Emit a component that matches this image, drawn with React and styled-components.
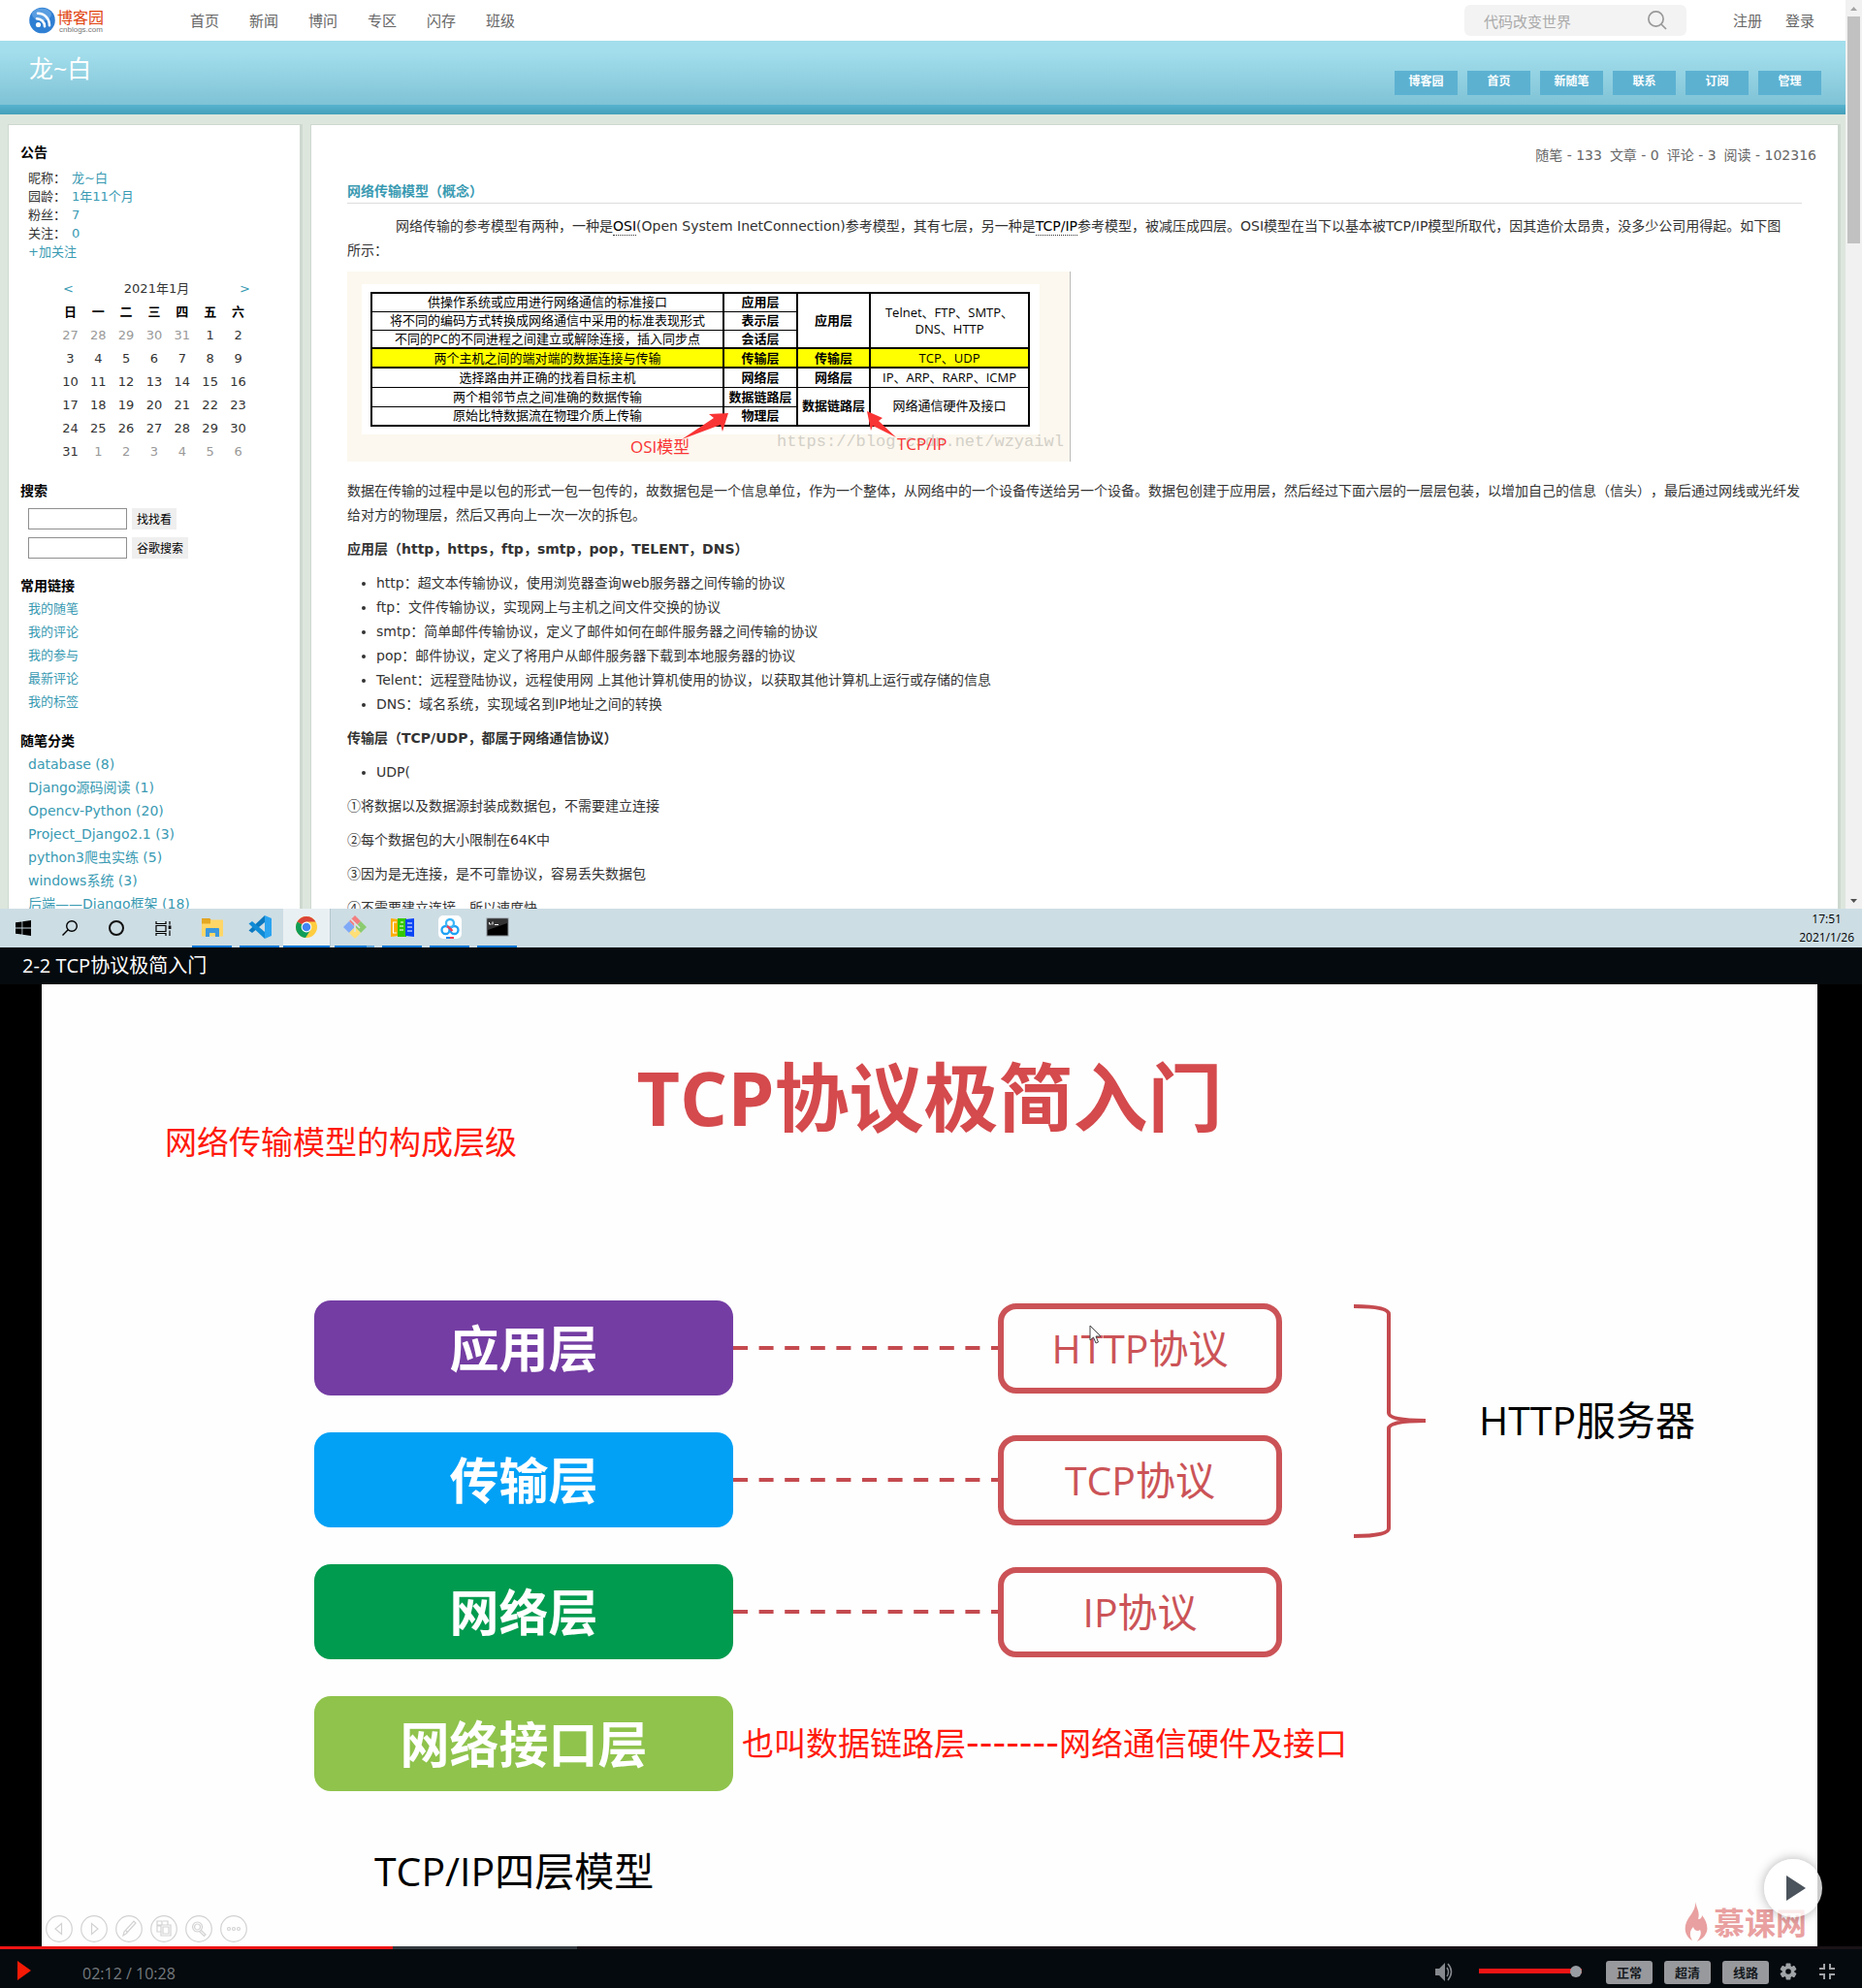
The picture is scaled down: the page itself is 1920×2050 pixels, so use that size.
import React from "react";
import styled, { createGlobalStyle } from "styled-components";

const verdana = `"DejaVu Sans", "Noto Sans CJK SC", sans-serif`;
const yahei = `"Open Sans", "Noto Sans CJK SC", sans-serif`;
const cjk = `"Noto Sans CJK SC", sans-serif`;

const GlobalStyle = createGlobalStyle`
  *, *::before, *::after { box-sizing: border-box; }
  body { margin: 0; background: #000; font-family: ${verdana}; text-spacing-trim: space-all; }
  h1, h2, h3, p, ul, figure { margin: 0; padding: 0; font-weight: inherit; }
  a { text-decoration: none; color: inherit; }
  button, input { font-family: inherit; }
  button { border: 0; padding: 0; background: none; cursor: pointer; }
`;

const Screen = styled.div`
  display: flex;
  flex-direction: column;
  height: 100vh;
`;

/* ---------- browser window ---------- */

const Browser = styled.section`
  flex: 1 1 0;
  min-height: 600px;
  display: flex;
  overflow: hidden;
  background: #dde6dd;
`;

const Page = styled.div`
  flex: 1;
  min-width: 0;
  display: flex;
  flex-direction: column;
`;

const ScrollTrack = styled.div`
  width: 17px;
  flex: none;
  display: flex;
  flex-direction: column;
  align-items: center;
  background: #f1f1f1;
`;

const ScrollThumb = styled.div`
  width: 13px;
  height: 234px;
  margin-bottom: auto;
  background: #c1c1c1;
`;

const ScrollArrow = styled.svg`
  width: 17px;
  height: 17px;
  fill: ${(p) => p.$color};
`;

const TopBar = styled.header`
  flex: none;
  height: 42px;
  padding: 0 32px 0 30px;
  display: flex;
  align-items: center;
  background: #fff;
  color: #666;
  font: 15px/24px ${cjk};
`;

const Logo = styled.a`
  display: flex;
  align-items: center;
  gap: 2px;
  width: 166px;
`;

const LogoText = styled.span`
  display: flex;
  flex-direction: column;
  color: #e0430f;
  font-size: 16px;
  line-height: 18px;
`;

const LogoDomain = styled.small`
  padding-left: 2px;
  color: #777;
  font: 8px/9px "Liberation Sans", sans-serif;
`;

const TopNav = styled.nav`
  display: flex;
  gap: 31px;
  flex: 1;
`;

const SearchBox = styled.form`
  display: flex;
  align-items: center;
  justify-content: space-between;
  width: 229px;
  height: 32px;
  padding: 0 20px;
  border-radius: 6px;
  background: #f3f3f3;
`;

const SearchInput = styled.input`
  width: 150px;
  padding: 0;
  border: 0;
  outline: 0;
  background: transparent;
  font-size: 15px;
  &::placeholder { color: #aaa; }
`;

const SearchButton = styled.button`
  display: flex;
`;

const Account = styled.div`
  display: flex;
  gap: 24px;
  margin-left: 48px;
`;

const Banner = styled.div`
  flex: none;
  display: flex;
  justify-content: space-between;
  align-items: flex-start;
  height: 76px;
  padding: 12px 25px 0 30px;
  background: linear-gradient(#a3deec 15%, #7fc3d6 66px, #57b3ce 66px, #459fba);
`;

const BlogTitle = styled.h1`
  color: #fff;
  font: 25px/32px ${yahei};
`;

const BlogNav = styled.nav`
  display: flex;
  gap: 10px;
  padding-top: 19px;
`;

const BlogNavLink = styled.a`
  width: 65px;
  height: 25px;
  background: #5cb1d1;
  color: #fff;
  text-align: center;
  font: bold 12px/20px ${cjk};
`;

const Columns = styled.div`
  flex: 1;
  display: flex;
  align-items: flex-start;
  gap: 8px;
  padding: 10px 5px 0 8px;
`;

const Panel = styled.div`
  border: solid #cdd8cf;
  border-width: 1px 3px 0 1px;
  background: #fff;
`;

const Sidebar = styled(Panel)`
  flex: none;
  width: 304px;
  padding: 0 12px;
  color: #333;
  font-size: 13px;
`;

const SideTitle = styled.h3`
  margin-top: 16px;
  padding-bottom: 2px;
  color: #000;
  font: bold 14px/22px ${cjk};
`;

const SideBody = styled.div`
  padding-left: 8px;
`;

const Profile = styled(SideBody)`
  padding-top: 5px;
  line-height: 19px;
`;

const ProfileRow = styled.div`
  display: flex;
  gap: 6px;
`;

const TealLink = styled.a`
  color: #399ab2;
`;

const Calendar = styled.table`
  width: 202px;
  margin: 17px auto 0;
  border-collapse: collapse;
  table-layout: fixed;
  text-align: center;
  line-height: 24px;
  th, td { padding: 0; height: 24px; }
  th { color: #000; }
`;

const Month = styled.div`
  display: flex;
  justify-content: space-between;
  padding: 0 2px 0 7px;
  color: #333;
  font-weight: normal;
`;

const Day = styled.td`
  color: ${(p) => (p.$muted ? "#999" : "#333")};
`;

const SideSearch = styled.form`
  display: flex;
  gap: 5px;
  margin-top: ${(p) => (p.$first ? 6 : 8)}px;
`;

const SideInput = styled.input`
  width: 102px;
  height: 22px;
  border: 1px solid #8f8f8f;
  background: #fff;
`;

const SideButton = styled.button`
  height: 22px;
  padding: 0 5px;
  background: #efefef;
  color: #000;
  font: 12px/22px ${cjk};
`;

const LinkList = styled.ul`
  padding-left: 8px;
  list-style: none;
  font-size: ${(p) => p.$size || 13}px;
  line-height: 24px;
  white-space: nowrap;
`;

const Content = styled(Panel)`
  flex: 1;
  min-width: 0;
  padding: 19px 22px 0 37px;
`;

const Stats = styled.div`
  display: flex;
  justify-content: flex-end;
  gap: 8px;
  color: #666;
  font-size: 14px;
  line-height: 24px;
`;

const Article = styled.article`
  margin-right: 15px;
  color: #333;
  font-size: 14px;
  line-height: 25px;
  p, ul { margin: 10px 0; }
  ul { padding-left: 30px; }
  abbr { color: #000; text-decoration: none; border-bottom: 1px dotted #333; padding-bottom: 1px; }
`;

const PostTitle = styled.h2`
  margin-top: 13px;
  padding-bottom: 2px;
  border-bottom: 1px solid #ddd;
  color: #399ab2;
  font: bold 14px/22px ${cjk};
`;

const Lead = styled.p`
  && { margin: 11px 0 9px; }
  text-indent: 50px;
`;

const Marker = styled.span`
  font-family: ${cjk};
  line-height: 1;
`;

const Figure = styled.figure`
  position: relative;
  width: 746px;
  height: 196px;
  margin-bottom: 18px;
  padding: 13px 31px 0 15px;
  border-right: 1px solid #bbb;
  background: #fcf8ef;
`;

const FigurePaper = styled.div`
  padding: 8px 10px 8px 9px;
  background: #fff;
`;

const HotRow = styled.tr`
  background: #ff0;
`;

const ModelTable = styled.table`
  width: 100%;
  border: 2px solid #000;
  border-collapse: collapse;
  table-layout: fixed;
  color: #000;
  text-align: center;
  font: 13px/17px ${yahei};
  td, th { height: 19px; padding: 0; border: 1px solid #000; white-space: nowrap; }
  tr > * + * { border-left-width: 2px; }
  ${HotRow} > * { height: 20px; border-top-width: 2px; border-bottom-width: 2px; }
  ${HotRow} ~ tr > * { height: 20px; }
`;

const FigureMark = styled.span`
  position: absolute;
  top: ${(p) => p.$top}px;
  left: ${(p) => p.$left}px;
  color: ${(p) => p.$color || "#f93434"};
  font: 17px/20px ${(p) => p.$font || yahei};
`;

const FigureArrows = styled.svg`
  position: absolute;
  top: 0;
  left: 0;
  width: 746px;
  height: 196px;
`;

/* ---------- taskbar ---------- */

const Taskbar = styled.footer`
  flex: none;
  display: flex;
  height: 40px;
  background: #cddde4;
`;

const SystemButton = styled.button`
  width: 48px;
  display: grid;
  place-items: center;
`;

const AppButton = styled.button`
  width: 49px;
  padding: 0 4px;
  border-right: ${(p) => (p.$active ? "1px solid #b5c7cf" : "0")};
  background: ${(p) => (p.$active ? "#e9f0f3" : "none")};
  svg { display: block; margin: 0 auto; }
  &::after {
    content: "";
    display: block;
    height: 2px;
    margin: 0 ${(p) => (p.$active ? "-4px" : "0")};
    background: ${(p) => (p.$stacked ? "linear-gradient(90deg, #0077d7 80%, #5ba3dc 80%)" : "#0077d7")};
  }
`;

const Apps = styled.div`
  display: flex;
  padding-left: 2px;
`;

const Clock = styled.time`
  margin-left: auto;
  padding: 1px 8px 0;
  color: #000;
  text-align: center;
  font: 12px/19px ${yahei};
`;

/* ---------- video player ---------- */

const Player = styled.section`
  flex: none;
  position: relative;
  background: #000;
`;

const PlayerTitle = styled.h2`
  height: 38px;
  padding-left: 23px;
  background: #050a0e;
  color: #fff;
  font: 20px/38px ${yahei};
`;

const Slide = styled.div`
  margin: 0 46px 0 43px;
  padding: 91px 0 4px;
  background: #fefefe;
  font-family: ${yahei};
`;

const SlideTitle = styled.h3`
  color: #d44a4d;
  text-align: center;
  font-size: 77px;
  font-weight: bold;
  line-height: 52px;
`;

const RedNote = styled.p`
  padding-left: ${(p) => p.$indent}px;
  color: #ff1a0c;
  font-size: 33px;
  line-height: 40px;
  white-space: nowrap;
`;

const Hyphens = styled.span`
  font-family: "DejaVu Sans", sans-serif;
  font-size: 38px;
  line-height: 1;
`;

const Diagram = styled.div`
  display: flex;
  align-items: flex-start;
  margin-top: 143px;
  padding-left: 281px;
`;

const Layers = styled.div`
  display: flex;
  flex-direction: column;
  gap: 38px;
  width: 998px;
`;

const LayerRow = styled.div`
  display: flex;
  align-items: center;
`;

const Layer = styled.div`
  flex: none;
  width: 432px;
  height: 98px;
  border-radius: 17px;
  background: ${(p) => p.$color};
  color: #fff;
  text-align: center;
  font: bold 51px/94px ${cjk};
`;

const Connector = styled.svg`
  flex: 1;
  height: 4px;
  stroke: #c44a4f;
  stroke-width: 4;
  stroke-dasharray: 15 11.6;
`;

const Protocol = styled.div`
  flex: none;
  position: relative;
  width: 293px;
  height: 93px;
  border: 6px solid #cb5357;
  border-radius: 19px;
  color: #cb5357;
  text-align: center;
  font-size: 41px;
  line-height: 80px;
`;

const Pointer = styled.svg`
  position: absolute;
  top: 16px;
  left: 88px;
`;

const ServerGroup = styled.div`
  display: flex;
  align-items: center;
  gap: 54px;
  margin: 4px 0 0 74px;
  color: #000;
  font-size: 41px;
  white-space: nowrap;
`;

const ServerLabel = styled.span`
  padding-bottom: 8px;
`;

const Caption = styled.p`
  margin-top: 53px;
  padding-left: 343px;
  color: #000;
  font-size: 41px;
  line-height: 58px;
`;

const SlideTools = styled.div`
  display: flex;
  gap: 8px;
  margin-top: 17px;
  padding-left: 4px;
`;

const SlideTool = styled.button`
  width: 28px;
  height: 28px;
  svg { display: block; }
`;

const Stage = styled.div`
  position: relative;
`;

const Watermark = styled.div`
  position: absolute;
  right: 57px;
  bottom: 5px;
  display: flex;
  align-items: center;
  gap: 6px;
  color: #e9a0a0;
  font: bold 32px/42px ${cjk};
`;

const BigPlay = styled.button`
  position: absolute;
  right: 41px;
  bottom: 30px;
  width: 60px;
  height: 60px;
  border-radius: 50%;
  background: rgba(255, 255, 255, 0.8);
  box-shadow: 0 0 12px rgba(0, 0, 0, 0.3);
  svg { display: block; }
`;

const Progress = styled.div`
  display: flex;
  height: 3px;
  background: #191216;
`;

const ProgressPart = styled.div`
  background: ${(p) => p.$color};
`;

const Controls = styled.div`
  display: flex;
  align-items: center;
  height: 40px;
  padding: 0 27px 0 18px;
  background: #050a0e;
`;

const IconButton = styled.button`
  display: flex;
`;

const Time = styled.span`
  margin: 10px auto 0 53px;
  color: #757a7e;
  font: 16px/20px ${yahei};
`;

const Volume = styled.input`
  appearance: none;
  width: 106px;
  height: 12px;
  margin: 5px 25px 0 27px;
  background: linear-gradient(#f01414, #f01414) 0 50% / 100% 5px no-repeat;
  &::-webkit-slider-thumb {
    appearance: none;
    width: 12px;
    height: 12px;
    border-radius: 50%;
    background: #989da3;
  }
`;

const VolumeButton = styled(IconButton)`
  padding-top: 4px;
`;

const Options = styled.div`
  display: flex;
  gap: 12px;
  margin-right: 11px;
  padding-top: 7px;
`;

const Option = styled.button`
  width: 48px;
  height: 24px;
  border-radius: 3px;
  background: #98999d;
  color: #15191d;
  font: bold 13px/24px ${cjk};
`;

const LowIcons = styled.div`
  display: flex;
  gap: 22px;
  padding-top: 5px;
`;

/* ---------- data ---------- */

const days = [
  27, 28, 29, 30, 31, 1, 2, 3, 4, 5, 6, 7, 8, 9, 10, 11, 12, 13, 14, 15, 16,
  17, 18, 19, 20, 21, 22, 23, 24, 25, 26, 27, 28, 29, 30, 31, 1, 2, 3, 4, 5, 6,
];
const weeks = [0, 1, 2, 3, 4, 5].map((w) => days.slice(w * 7, w * 7 + 7));

const profile = [["昵称：", "龙~白"], ["园龄：", "1年11个月"], ["粉丝：", "7"], ["关注：", "0"]];
const commonLinks = ["我的随笔", "我的评论", "我的参与", "最新评论", "我的标签"];
const categories = [
  "database (8)", "Django源码阅读 (1)", "Opencv-Python (20)", "Project_Django2.1 (3)",
  "python3爬虫实练 (5)", "windows系统 (3)", "后端——Django框架 (18)",
];
const protocols = [
  "http：超文本传输协议，使用浏览器查询web服务器之间传输的协议",
  "ftp：文件传输协议，实现网上与主机之间文件交换的协议",
  "smtp：简单邮件传输协议，定义了邮件如何在邮件服务器之间传输的协议",
  "pop：邮件协议，定义了将用户从邮件服务器下载到本地服务器的协议",
  "Telent：远程登陆协议，远程使用网 上其他计算机使用的协议，以获取其他计算机上运行或存储的信息",
  "DNS：域名系统，实现域名到IP地址之间的转换",
];
const udpNotes = [
  ["①", "将数据以及数据源封装成数据包，不需要建立连接"],
  ["②", "每个数据包的大小限制在64K中"],
  ["③", "因为是无连接，是不可靠协议，容易丢失数据包"],
  ["④", "不需要建立连接，所以速度快"],
];
const layers = [
  { name: "应用层", color: "#743da3", protocol: "HTTP协议" },
  { name: "传输层", color: "#02a1f6", protocol: "TCP协议" },
  { name: "网络层", color: "#009b4f", protocol: "IP协议" },
];

/* ---------- icons ---------- */

const BlogLogoIcon = () => (
  <svg width="27" height="28" viewBox="0 0 27 28">
    <circle cx="13.5" cy="14" r="13.3" fill="#2f7fd3" />
    <ellipse cx="13" cy="8" rx="10" ry="6.5" fill="#7db8ec" opacity=".55" />
    <circle cx="9.5" cy="18.5" r="2.6" fill="#fff" />
    <path d="M8 12.2a8 8 0 0 1 8 8M9 6.8c7 0 12 5.500 12 12.500" fill="none" stroke="#fff" strokeWidth="2.600" strokeLinecap="round" />
  </svg>
);

const Magnifier = () => (
  <svg width="20" height="20" viewBox="0 0 20 20" fill="none" stroke="#999" strokeWidth="1.700">
    <circle cx="8.500" cy="8.500" r="7.600" />
    <path d="M14 14l5 5" />
  </svg>
);

const WindowsIcon = () => (
  <svg width="16" height="16" viewBox="0 0 16 16">
    <path d="M0 2.300l6.500-.9v6.200H0zM7.300 1.300L16 0v7.600H7.300zM0 8.400h6.500v6.200L0 13.700zM7.300 8.400H16V16l-8.700-1.300z" />
  </svg>
);

const TaskSearchIcon = () => (
  <svg width="18" height="18" viewBox="0 0 18 18" fill="none" stroke="#000" strokeWidth="1.400">
    <circle cx="11" cy="7" r="5.300" />
    <path d="M7.200 10.800L1.500 16.500" />
  </svg>
);

const CortanaIcon = () => (
  <svg width="18" height="18" viewBox="0 0 18 18" fill="none" stroke="#111" strokeWidth="2">
    <circle cx="9" cy="9" r="7" />
  </svg>
);

const TaskViewIcon = () => (
  <svg width="17" height="17" viewBox="0 0 17 17" fill="none" stroke="#000" strokeWidth="1.200">
    <path d="M1 1v2.500h10V1M1 16v-2.500h10V16M1 5.500h10v6H1zM15 1v3.500M15 10.500V16" />
    <path d="M14.300 6h1.500v2.500h-1.500z" fill="#000" />
  </svg>
);

const AppSvg = ({ children }) => (
  <svg width="26" height="38" viewBox="0 -6 26 38">{children}</svg>
);

const FolderIcon = () => (
  <AppSvg>
    <path d="M2 4h8l2 2H2z" fill="#d99a1b" />
    <rect x="2" y="5.500" width="22" height="17" fill="#ffd667" />
    <rect x="2" y="4.500" width="9" height="5" fill="#e5a823" />
    <path d="M6 23v-8q0-1 1-1h12q1 0 1 1v8h-4v-4h-6v4z" fill="#3b97dd" />
  </AppSvg>
);

const CodeIcon = () => (
  <AppSvg>
    <path d="M18 1l7 3v18l-7 3z" fill="#2aa4f0" />
    <path d="M18 1v7L5 19l-3.500-2.500z" fill="#0b78bf" />
    <path d="M1.500 9.500L5 7l13 11v7z" fill="#108bd6" />
  </AppSvg>
);

const ChromeIcon = () => (
  <AppSvg>
    <circle cx="13" cy="13" r="11" fill="#ffcd40" />
    <path d="M13 13L3.500 7.500A11 11 0 0 1 22.500 7.500H13z" fill="#db4437" />
    <path d="M3.500 7.500A11 11 0 0 0 12 24l5.500-8.500L13 13z" fill="#0f9d58" />
    <circle cx="13" cy="13" r="5.400" fill="#fff" />
    <circle cx="13" cy="13" r="4.300" fill="#4285f4" />
  </AppSvg>
);

const GitIcon = () => (
  <AppSvg>
    <path d="M13 1l6 6-6 6-6-6z" fill="#f27f80" />
    <path d="M7 7l6 6-6 6-6-6z" fill="#7fa9f7" />
    <path d="M19 7l6 6-6 6-6-6z" fill="#8ccb70" />
    <path d="M13 13l6 6-6 6-6-6z" fill="#ffdf76" />
    <path d="M9 5l4 4v9M13 9l5 5" fill="none" stroke="#dbe6ea" strokeWidth="1.600" />
  </AppSvg>
);

const BooksIcon = () => (
  <AppSvg>
    <path d="M1 4l8 1v17l-8 1z" fill="#ffae00" />
    <path d="M8 4h9v19H8z" fill="#35c800" />
    <path d="M16 5l9-1v19l-9-1z" fill="#0a45f5" />
    <path d="M3 8h4M3.500 8v11M3 19h4M11 8h3M10 12h4M10 16h4M18 9h5M18 13h5M18 17h5" stroke="#fff" strokeWidth="1.200" fill="none" />
  </AppSvg>
);

const CloudDiskIcon = () => (
  <AppSvg>
    <rect x="1" y="1" width="24" height="24" rx="5" fill="#fff" />
    <g fill="none" strokeWidth="2.300">
      <circle cx="8.500" cy="16" r="4" stroke="#1fa2f5" />
      <circle cx="17.500" cy="16" r="4" stroke="#1fa2f5" />
      <circle cx="13" cy="9" r="4" stroke="#3cb6f7" />
      <path d="M10 12q3 2 5.500 5" stroke="#f23c55" />
    </g>
    <path d="M9 24h4" stroke="#1687f0" strokeWidth="2" />
    <path d="M13 24h4" stroke="#f23c55" strokeWidth="2" />
  </AppSvg>
);

const TerminalIcon = () => (
  <AppSvg>
    <rect x="2" y="4" width="22" height="18" fill="#000" stroke="#8d9499" />
    <path d="M3 5h20v4L3 16z" fill="#333" />
    <path d="M4.500 8v2h2M8 7.500v3M10 10.500h4" stroke="#fff" fill="none" />
  </AppSvg>
);

const toolShapes = [
  <path key="a" d="M16.500 8.500v11L10 14z" />,
  <path key="a" d="M11.500 8.500v11L18 14z" />,
  <path key="a" d="M8 21l1-4L19 6l2 2-10 11z M11 16l2 2" />,
  <path key="a" d="M7 6h5v4H7zM13 6h5v4M7 11h4v6H7zM11 10h10v11H11zM13 12h6v7h-6z" />,
  <path key="a" d="M12.500 7a5 5 0 1 0 .1 0M16 15l5 5-1.500 1.500-5-5M12.500 9a3 3 0 1 0 .1 0" />,
  <g key="a"><circle cx="9" cy="14" r="1.500" /><circle cx="14" cy="14" r="1.500" /><circle cx="19" cy="14" r="1.500" /></g>,
];
const toolNames = ["上一张", "下一张", "画笔", "全部幻灯片", "放大", "更多"];

const apps = [
  { name: "文件资源管理器", Icon: FolderIcon },
  { name: "代码编辑器", Icon: CodeIcon },
  { name: "浏览器", Icon: ChromeIcon, active: true },
  { name: "Git", Icon: GitIcon, stacked: true },
  { name: "笔记", Icon: BooksIcon },
  { name: "网盘", Icon: CloudDiskIcon },
  { name: "终端", Icon: TerminalIcon },
];

/* ---------- parts ---------- */

function ModelFigure() {
  return (
    <Figure>
      <FigurePaper>
        <ModelTable>
          <colgroup>
            <col />
            <col style={{ width: 76 }} />
            <col style={{ width: 75 }} />
            <col style={{ width: 164 }} />
          </colgroup>
          <tbody>
            <tr>
              <td>供操作系统或应用进行网络通信的标准接口</td>
              <th>应用层</th>
              <th rowSpan={3}>应用层</th>
              <td rowSpan={3}>Telnet、FTP、SMTP、<br />DNS、HTTP</td>
            </tr>
            <tr><td>将不同的编码方式转换成网络通信中采用的标准表现形式</td><th>表示层</th></tr>
            <tr><td>不同的PC的不同进程之间建立或解除连接，插入同步点</td><th>会话层</th></tr>
            <HotRow><td>两个主机之间的端对端的数据连接与传输</td><th>传输层</th><th>传输层</th><td>TCP、UDP</td></HotRow>
            <tr><td>选择路由并正确的找着目标主机</td><th>网络层</th><th>网络层</th><td>IP、ARP、RARP、ICMP</td></tr>
            <tr>
              <td>两个相邻节点之间准确的数据传输</td>
              <th>数据链路层</th>
              <th rowSpan={2}>数据链路层</th>
              <td rowSpan={2}>网络通信硬件及接口</td>
            </tr>
            <tr><td>原始比特数据流在物理介质上传输</td><th>物理层</th></tr>
          </tbody>
        </ModelTable>
      </FigurePaper>
      <FigureMark $top={166} $left={443} $color="#d3d0c8" $font={`"Liberation Mono", monospace`}>
        https://blog.csdn.net/wzyaiwl
      </FigureMark>
      <FigureMark $top={171} $left={292}>OSI模型</FigureMark>
      <FigureMark $top={168} $left={567}>TCP/IP</FigureMark>
      <FigureArrows viewBox="0 0 746 196" fill="#f93434">
        <path d="M393 146l-20 1 5 4-33 22 40-15 2 7z" />
        <path d="M536 144l16 7-4 3 18 17-24-12-2 5z" />
      </FigureArrows>
    </Figure>
  );
}

function BlogPage() {
  return (
    <Page>
      <TopBar>
        <Logo href="#" aria-label="博客园">
          <BlogLogoIcon />
          <LogoText>博客园<LogoDomain>cnblogs.com</LogoDomain></LogoText>
        </Logo>
        <TopNav>
          {["首页", "新闻", "博问", "专区", "闪存", "班级"].map((t) => <a href="#" key={t}>{t}</a>)}
        </TopNav>
        <SearchBox>
          <SearchInput placeholder="代码改变世界" aria-label="搜索" />
          <SearchButton type="button" aria-label="搜索"><Magnifier /></SearchButton>
        </SearchBox>
        <Account><a href="#">注册</a><a href="#">登录</a></Account>
      </TopBar>
      <Banner>
        <BlogTitle>龙~白</BlogTitle>
        <BlogNav>
          {["博客园", "首页", "新随笔", "联系", "订阅", "管理"].map((t) => (
            <BlogNavLink href="#" key={t}>{t}</BlogNavLink>
          ))}
        </BlogNav>
      </Banner>
      <Columns>
        <Sidebar as="aside">
          <SideTitle>公告</SideTitle>
          <Profile>
            {profile.map(([k, v]) => (
              <ProfileRow key={k}><span>{k}</span><TealLink href="#">{v}</TealLink></ProfileRow>
            ))}
            <TealLink href="#">+加关注</TealLink>
          </Profile>
          <Calendar>
            <thead>
              <tr>
                <th colSpan={7}>
                  <Month><TealLink href="#">&lt;</TealLink>2021年1月<TealLink href="#">&gt;</TealLink></Month>
                </th>
              </tr>
              <tr>{["日", "一", "二", "三", "四", "五", "六"].map((d) => <th key={d}>{d}</th>)}</tr>
            </thead>
            <tbody>
              {weeks.map((week, w) => (
                <tr key={w}>
                  {week.map((d, i) => (
                    <Day key={i} $muted={(w === 0 && d > 20) || (w === 5 && d < 20)}>{d}</Day>
                  ))}
                </tr>
              ))}
            </tbody>
          </Calendar>
          <SideTitle>搜索</SideTitle>
          <SideBody>
            <SideSearch $first>
              <SideInput aria-label="找找看" /><SideButton type="button">找找看</SideButton>
            </SideSearch>
            <SideSearch>
              <SideInput aria-label="谷歌搜索" /><SideButton type="button">谷歌搜索</SideButton>
            </SideSearch>
          </SideBody>
          <SideTitle>常用链接</SideTitle>
          <LinkList>{commonLinks.map((t) => <li key={t}><TealLink href="#">{t}</TealLink></li>)}</LinkList>
          <SideTitle>随笔分类</SideTitle>
          <LinkList $size={14}>{categories.map((t) => <li key={t}><TealLink href="#">{t}</TealLink></li>)}</LinkList>
        </Sidebar>
        <Content as="main">
          <Stats>
            <span>随笔 - 133</span><span>文章 - 0</span><span>评论 - 3</span><span>阅读 - 102316</span>
          </Stats>
          <Article>
            <PostTitle>网络传输模型（概念）</PostTitle>
            <Lead>
              网络传输的参考模型有两种，一种是<abbr>OSI</abbr>(Open System InetConnection)参考模型，其有七层，另一种是<abbr>TCP/IP</abbr>参考模型，被减压成四层。OSI模型在当下以基本被TCP/IP模型所取代，因其造价太昂贵，没多少公司用得起。如下图<br />所示：
            </Lead>
            <ModelFigure />
            <p>
              数据在传输的过程中是以包的形式一包一包传的，故数据包是一个信息单位，作为一个整体，从网络中的一个设备传送给另一个设备。数据包创建于应用层，然后经过下面六层的一层层包装，以增加自己的信息（信头），最后通过网线或光纤发给对方的物理层，然后又再向上一次一次的拆包。
            </p>
            <p><strong>应用层（http，https，ftp，smtp，pop，TELENT，DNS）</strong></p>
            <ul>{protocols.map((t) => <li key={t}>{t}</li>)}</ul>
            <p><strong>传输层（TCP/UDP，都属于网络通信协议）</strong></p>
            <ul><li>UDP(</li></ul>
            {udpNotes.map(([mark, text]) => <p key={mark}><Marker>{mark}</Marker>{text}</p>)}
          </Article>
        </Content>
      </Columns>
    </Page>
  );
}

function VideoPlayer() {
  return (
    <Player>
      <PlayerTitle>2-2 TCP协议极简入门</PlayerTitle>
      <Stage>
        <Slide>
          <SlideTitle>TCP协议极简入门</SlideTitle>
          <RedNote $indent={127}>网络传输模型的构成层级</RedNote>
          <Diagram>
            <Layers>
              {layers.map((l, i) => (
                <LayerRow key={l.name}>
                  <Layer $color={l.color}>{l.name}</Layer>
                  <Connector><line x1="0" y1="2" x2="100%" y2="2" /></Connector>
                  <Protocol>
                    {l.protocol}
                    {i === 0 && (
                      <Pointer width="14" height="20" viewBox="0 0 14 20">
                        <path d="M1 1v15l3.500-3 2.500 6 2.500-1-2.500-6h5z" fill="#fff" stroke="#444" />
                      </Pointer>
                    )}
                  </Protocol>
                </LayerRow>
              ))}
              <LayerRow>
                <Layer $color="#8fc34c">网络接口层</Layer>
                <RedNote $indent={9}>也叫数据链路层<Hyphens>-------</Hyphens>网络通信硬件及接口</RedNote>
              </LayerRow>
            </Layers>
            <ServerGroup>
              <svg width="75" height="242" viewBox="0 0 75 242" fill="none" stroke="#c44a4f" strokeWidth="4">
                <path d="M0 2Q36 2 36 10V112Q36 120 74 120Q36 120 36 128V231Q36 239 0 239" />
              </svg>
              <ServerLabel>HTTP服务器</ServerLabel>
            </ServerGroup>
          </Diagram>
          <Caption>TCP/IP四层模型</Caption>
          <SlideTools>
            {toolShapes.map((shape, i) => (
              <SlideTool key={toolNames[i]} aria-label={toolNames[i]}>
                <svg width="28" height="28" viewBox="0 0 28 28" fill="none" stroke="#d2d2d2" strokeWidth="1.200">
                  <circle cx="14" cy="14" r="13.300" />
                  {shape}
                </svg>
              </SlideTool>
            ))}
          </SlideTools>
        </Slide>
        <Watermark>
          <svg width="24" height="41" viewBox="0 0 24 41" fill="#e9a0a0">
            <path d="M11 0C13 8 16 11 14 18c3 0 4-2 4-4 5 6 7 14 4 19-2 4-5 6-9 8 3-4 5-8 3-12-2 2-6 1-7-3-4 4-4 9-1 14C1 36-1 28 2 21 5 14 12 9 11 0z" />
          </svg>
          慕课网
        </Watermark>
        <BigPlay aria-label="播放">
          <svg width="60" height="60"><path d="M23 17l20 13-20 13z" fill="#4b535c" /></svg>
        </BigPlay>
      </Stage>
      <Progress>
        <ProgressPart $color="#f01414" style={{ width: "21.1%" }} />
        <ProgressPart $color="#343a3f" style={{ width: "9.9%" }} />
      </Progress>
      <Controls>
        <IconButton aria-label="播放">
          <svg width="14" height="24"><path d="M0 4l14 10L0 24z" fill="#f51a05" /></svg>
        </IconButton>
        <Time>02:12 / 10:28</Time>
        <VolumeButton aria-label="音量">
          <svg width="18" height="24" viewBox="0 0 18 24">
            <path d="M0 10h4l6-6v19l-6-6H0z" fill="#85898d" />
            <path d="M12 9q3 4.500 0 9M13 5q7 8 0 17" fill="none" stroke="#85898d" strokeWidth="1.500" />
          </svg>
        </VolumeButton>
        <Volume type="range" min="0" max="100" defaultValue="100" aria-label="音量大小" />
        <Options>
          <Option>正常</Option><Option>超清</Option><Option>线路</Option>
        </Options>
        <LowIcons>
          <IconButton aria-label="设置">
            <svg width="18" height="18" viewBox="0 0 18 18">
              <g fill="#a1a4a7">
                {[0, 60, 120].map((a) => (
                  <rect key={a} x="6.500" y="0.500" width="5" height="17" rx="1" transform={`rotate(${a} 9 9)`} />
                ))}
                <circle cx="9" cy="9" r="6.300" />
              </g>
              <circle cx="9" cy="9" r="2.800" fill="#050a0e" />
            </svg>
          </IconButton>
          <IconButton aria-label="退出全屏">
            <svg width="18" height="18" viewBox="0 0 18 18" fill="none" stroke="#a1a4a7" strokeWidth="2">
              <path d="M1 6h5V1M12 1v5h5M17 12h-5v5M6 17v-5H1" />
            </svg>
          </IconButton>
        </LowIcons>
      </Controls>
    </Player>
  );
}

export default function App() {
  return (
    <Screen>
      <GlobalStyle />
      <Browser>
        <BlogPage />
        <ScrollTrack>
          <ScrollArrow $color="#a3a3a3" viewBox="0 0 17 17"><path d="M5 11l3.500-4 3.500 4z" /></ScrollArrow>
          <ScrollThumb />
          <ScrollArrow $color="#505050" viewBox="0 0 17 17"><path d="M5 7l3.500 4L12 7z" /></ScrollArrow>
        </ScrollTrack>
      </Browser>
      <Taskbar>
        <SystemButton aria-label="开始"><WindowsIcon /></SystemButton>
        <SystemButton aria-label="搜索"><TaskSearchIcon /></SystemButton>
        <SystemButton aria-label="助手"><CortanaIcon /></SystemButton>
        <SystemButton aria-label="任务视图"><TaskViewIcon /></SystemButton>
        <Apps>
          {apps.map(({ name, Icon, active, stacked }) => (
            <AppButton key={name} aria-label={name} $active={active} $stacked={stacked}><Icon /></AppButton>
          ))}
        </Apps>
        <Clock>17:51<br />2021/1/26</Clock>
      </Taskbar>
      <VideoPlayer />
    </Screen>
  );
}
